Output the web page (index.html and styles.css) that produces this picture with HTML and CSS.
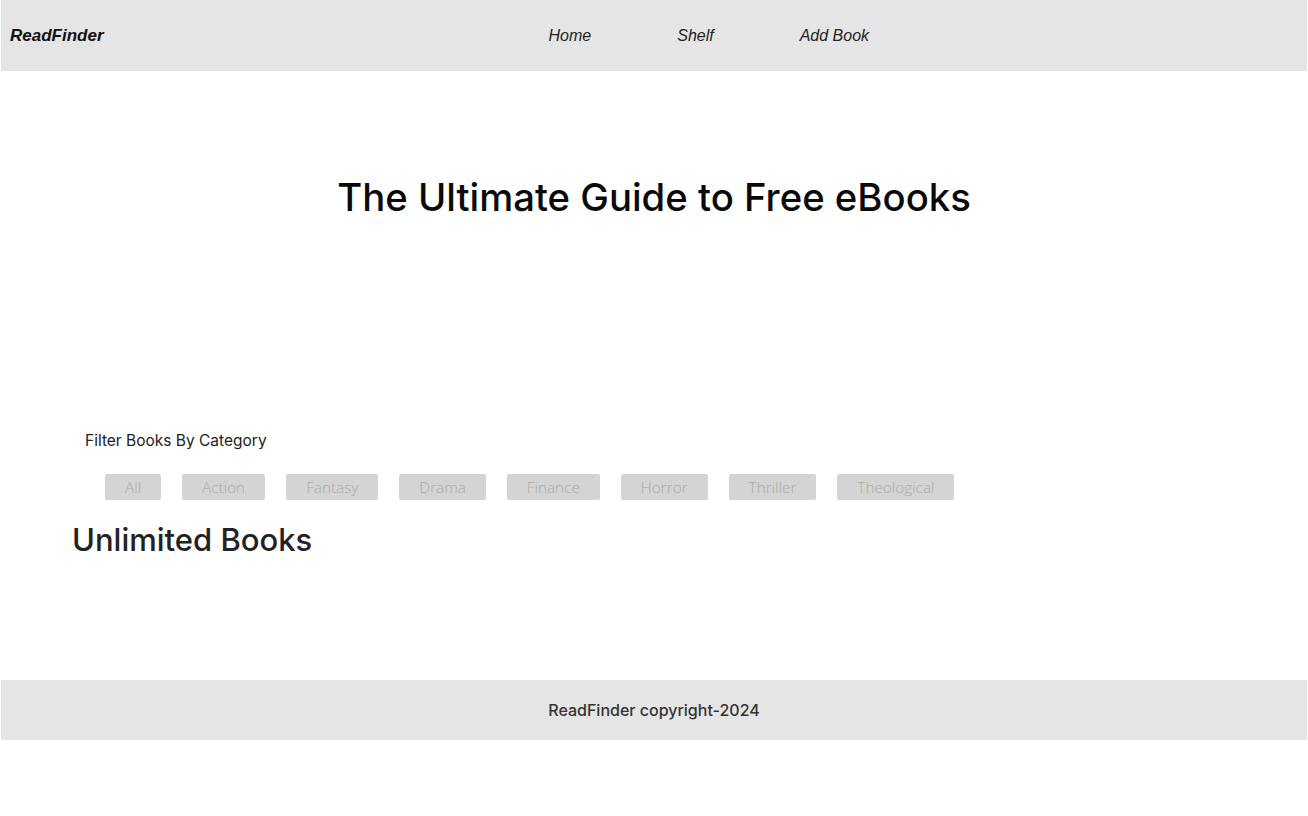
FILE: index.html
```html
<!DOCTYPE html>
<html lang="en">
<head>
<meta charset="utf-8">
<title>ReadFinder</title>
<link rel="stylesheet" href="styles.css">
</head>
<body>
<header class="topbar">
  <div class="brand">ReadFinder</div>
  <nav class="nav">
    <a href="#" class="nav-link">Home</a>
    <a href="#" class="nav-link">Shelf</a>
    <a href="#" class="nav-link">Add Book</a>
  </nav>
</header>
<main class="main">
  <section class="hero">
    <h1 class="hero-title">The Ultimate Guide to Free eBooks</h1>
  </section>
  <section class="filter">
    <p class="filter-label">Filter Books By Category</p>
    <div class="filter-buttons">
      <button class="chip">All</button>
      <button class="chip">Action</button>
      <button class="chip">Fantasy</button>
      <button class="chip">Drama</button>
      <button class="chip">Finance</button>
      <button class="chip">Horror</button>
      <button class="chip">Thriller</button>
      <button class="chip">Theological</button>
    </div>
  </section>
  <section class="books">
    <h2 class="books-title">Unlimited Books</h2>
  </section>
</main>
<footer class="footer">ReadFinder copyright-2024</footer>
</body>
</html>
```
FILE: styles.css
```css
* { box-sizing: border-box; }
html, body { margin: 0; padding: 0; background: #fff; }
body { font-family: Inter, "Noto Sans", sans-serif; color: #222; }

.topbar {
  height: 71px;
  background: #e5e5e5;
  display: flex;
  align-items: center;
  padding-left: 9px;
  margin-left: 1px;
  margin-right: 1px;
}
.brand {
  font-family: "Liberation Sans", Arial, sans-serif;
  font-weight: 700;
  font-style: italic;
  font-size: 17px;
  color: #111;
}
.nav {
  display: flex;
  gap: 86px;
  margin-left: 445px;
}
.nav-link {
  font-family: "Liberation Sans", Arial, sans-serif;
  font-style: italic;
  font-size: 16px;
  color: #222;
  text-decoration: none;
}

.main { display: flex; flex-direction: column; }
.hero { height: 360px; padding-top: 103px; text-align: center; }
.hero-title {
  margin: 0;
  font-size: 38.3px;
  font-weight: 500;
  color: #0a0a0a;
}

.filter { padding-left: 85px; }
.filter-label { margin: 0; font-size: 15.5px; color: #222; line-height: 20px; }
.filter-buttons {
  display: flex;
  gap: 21px;
  margin-top: 23px;
  padding-left: 20px;
}
.chip {
  height: 26px;
  padding: 0 20px;
  border: none;
  border-radius: 2px;
  background: #d4d4d4;
  color: #ababab;
  font-family: "Open Sans", Lato, sans-serif;
  font-weight: 300;
  font-size: 15.3px;
}

.books { padding-left: 72px; height: 180px; }
.books-title { margin: 21px 0 0; font-size: 31px; font-weight: 500; color: #222; }

.footer {
  height: 60px;
  background: #e5e5e5;
  display: flex;
  align-items: center;
  justify-content: center;
  font-size: 16px;
  font-weight: 500;
  color: #333;
  margin: 0 1px;
}
```
